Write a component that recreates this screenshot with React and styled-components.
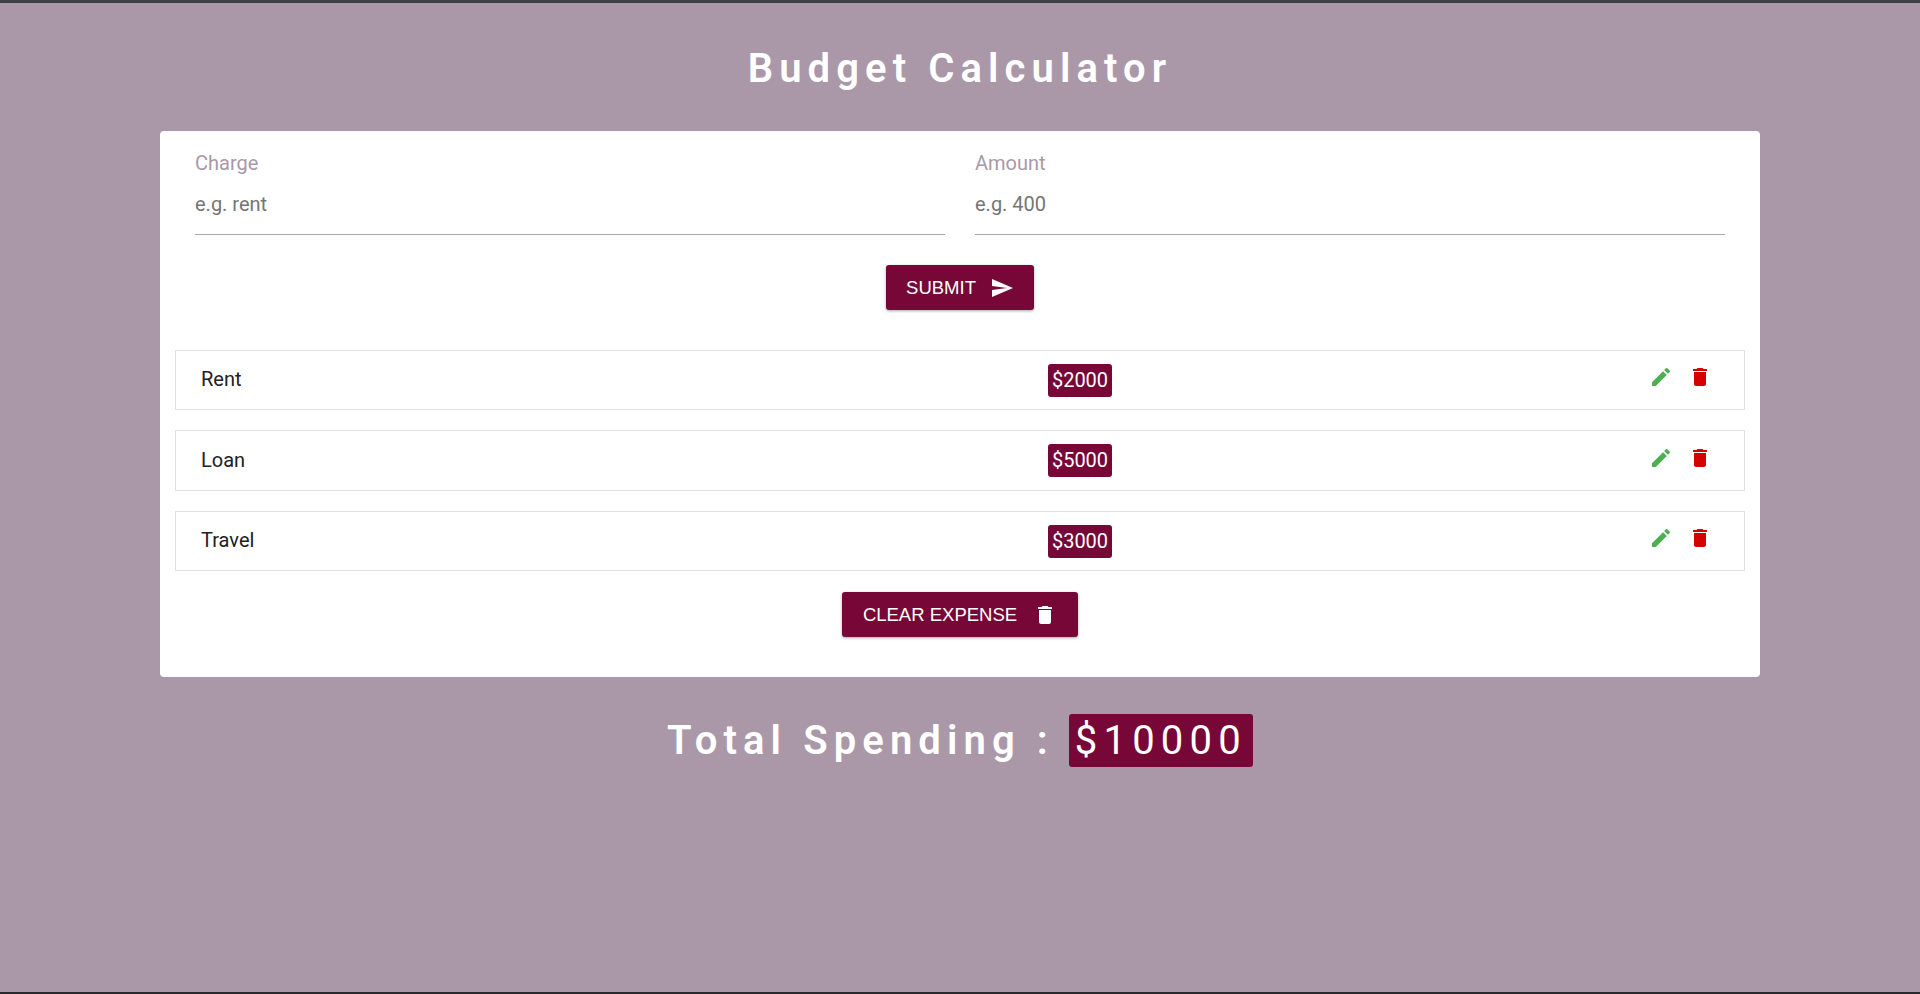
import React from 'react';
import styled, { createGlobalStyle } from 'styled-components';
import { MdSend, MdEdit, MdDelete } from 'react-icons/md';

const GlobalStyle = createGlobalStyle`
  html, body { margin: 0; padding: 0; height: 100%; }
  body { font-family: Roboto, "Liberation Sans", sans-serif; background: #aa98a9; }
  * { box-sizing: border-box; }
`;

const maroon = '#770737';

const Page = styled.main`
  height: 994px;
  overflow: hidden;
  background: #aa98a9;
  border-top: 3px solid #3f3f46;
  border-bottom: 2px solid #2a2a2e;
  display: flex;
  flex-direction: column;
  align-items: center;
`;

const Title = styled.h1`
  margin: 0;
  padding-top: 42px;
  height: 128px;
  font-size: 40px;
  line-height: 48px;
  font-weight: 600;
  letter-spacing: 6.1px;
  color: #fff;
  text-align: center;
`;

const Card = styled.section`
  width: 1600px;
  height: 546px;
  background: #fff;
  border-radius: 4px;
  padding: 20px 15px 0;
`;

const FormRow = styled.form`
  display: grid;
  grid-template-columns: 750px 750px;
  column-gap: 30px;
  padding: 0 20px;
`;

const Field = styled.div`
  display: flex;
  flex-direction: column;
  height: 84px;
  border-bottom: 1px solid #aaa;
`;

const Label = styled.label`
  font-size: 20px;
  line-height: 25px;
  color: #aa98a9;
`;

const Input = styled.input`
  border: 0;
  outline: 0;
  padding: 0;
  margin-top: 15px;
  height: 25px;
  font-family: inherit;
  font-size: 20px;
  color: #333;
  background: transparent;
  &::placeholder { color: #757575; opacity: 1; }
`;

const ButtonRow = styled.div`
  display: flex;
  justify-content: center;
  margin-top: ${p => p.$top}px;
`;

const ActionButton = styled.button`
  display: inline-flex;
  align-items: center;
  height: 45px;
  padding: 0 ${p => p.$pad}px;
  gap: ${p => p.$gap}px;
  border: 0;
  border-radius: 3px;
  background: ${maroon};
  color: #fff;
  font-family: "Liberation Sans", Arial, sans-serif;
  font-size: 18.5px;
  box-shadow: 0 1px 3px rgba(0, 0, 0, 0.35);
  svg { flex: none; }
`;

const List = styled.ul`
  list-style: none;
  margin: 40px 0 0;
  padding: 0;
  display: flex;
  flex-direction: column;
  gap: 20px;
`;

const Row = styled.li`
  display: grid;
  grid-template-columns: 847px 64px 1fr;
  align-items: center;
  height: ${p => p.$height}px;
  padding-left: 25px;
  border: 1px solid #e0e0e0;
`;

const Name = styled.span`
  font-size: 20px;
  color: #212121;
  position: relative;
  top: -1px;
`;

const Amount = styled.span`
  display: block;
  width: 64px;
  height: 33px;
  line-height: 33px;
  text-align: center;
  background: ${maroon};
  color: #fff;
  font-size: 20px;
  border-radius: 3px;
`;

const Actions = styled.div`
  display: flex;
  justify-content: flex-end;
  gap: 15px;
  padding-right: 32px;
  height: 24px;
  position: relative;
  top: -3px;
`;

const IconButton = styled.button`
  border: 0;
  padding: 0;
  width: 24px;
  height: 24px;
  background: none;
  color: ${p => p.$color};
  display: flex;
  svg { display: block; }
`;

const Total = styled.h2`
  margin: 37px 0 0;
  display: flex;
  align-items: center;
  gap: 15px;
  font-size: 40px;
  line-height: 48px;
  font-weight: 600;
  letter-spacing: 6.1px;
  color: #fff;
`;

const TotalValue = styled.span`
  display: block;
  height: 53px;
  line-height: 53px;
  padding: 0 6px;
  background: ${maroon};
  border-radius: 3px;
  font-weight: 400;
  letter-spacing: 6.2px;
`;

const expenses = [
  { name: 'Rent', amount: 2000, height: 60 },
  { name: 'Loan', amount: 5000, height: 61 },
  { name: 'Travel', amount: 3000, height: 60 },
];

export default function App() {
  return (
    <Page>
      <GlobalStyle />
      <Title>Budget Calculator</Title>
      <Card>
        <FormRow onSubmit={e => e.preventDefault()}>
          <Field>
            <Label htmlFor="charge">Charge</Label>
            <Input id="charge" placeholder="e.g. rent" />
          </Field>
          <Field>
            <Label htmlFor="amount">Amount</Label>
            <Input id="amount" placeholder="e.g. 400" />
          </Field>
        </FormRow>
        <ButtonRow $top={30}>
          <ActionButton $pad={20} $gap={14}>
            SUBMIT <MdSend size={24} />
          </ActionButton>
        </ButtonRow>
        <List>
          {expenses.map(item => (
            <Row key={item.name} $height={item.height}>
              <Name>{item.name}</Name>
              <Amount>${item.amount}</Amount>
              <Actions>
                <IconButton $color="#4caf50" aria-label="edit"><MdEdit size={24} /></IconButton>
                <IconButton $color="#d50000" aria-label="delete"><MdDelete size={24} /></IconButton>
              </Actions>
            </Row>
          ))}
        </List>
        <ButtonRow $top={21}>
          <ActionButton $pad={21} $gap={16}>
            CLEAR EXPENSE <MdDelete size={24} />
          </ActionButton>
        </ButtonRow>
      </Card>
      <Total>
        Total Spending :
        <TotalValue>$10000</TotalValue>
      </Total>
    </Page>
  );
}
